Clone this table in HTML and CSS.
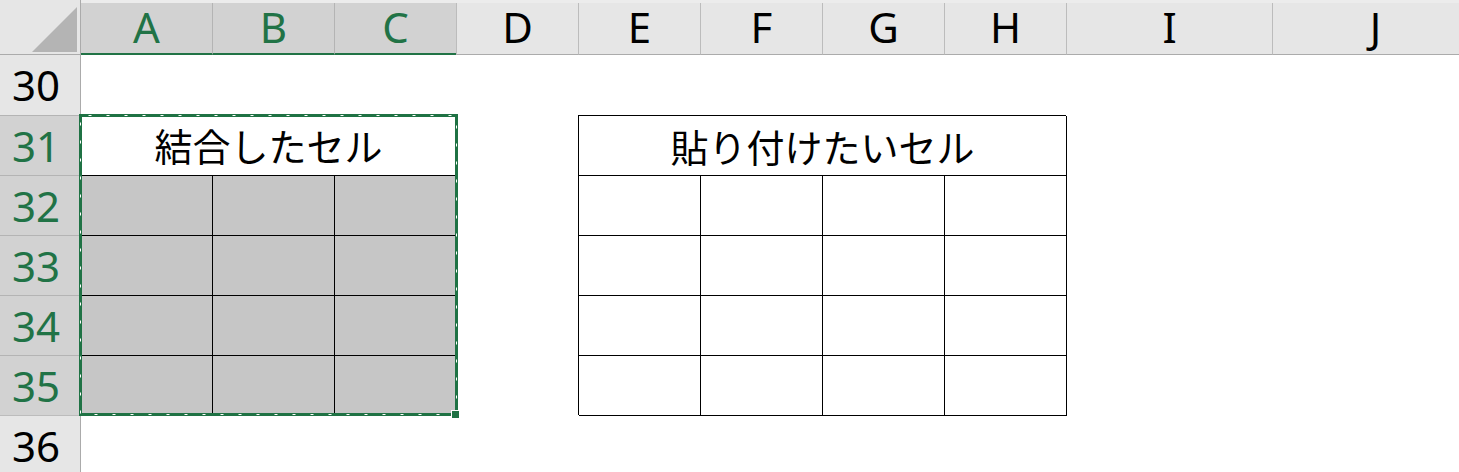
FILE: index.html
```html
<!DOCTYPE html>
<html lang="ja">
<head>
<meta charset="utf-8">
<title>Sheet</title>
<link rel="stylesheet" href="styles.css">
</head>
<body>
<div class="sheet">
  <div class="colhdrs">
    <div class="corner"><span class="tri"></span></div>
    <div class="ch ch-a sel">A</div>
    <div class="ch sel">B</div>
    <div class="ch sel">C</div>
    <div class="ch">D</div>
    <div class="ch">E</div>
    <div class="ch">F</div>
    <div class="ch">G</div>
    <div class="ch">H</div>
    <div class="ch ch-wide">I</div>
    <div class="ch ch-wide">J</div>
  </div>
  <div class="body">
    <div class="rowhdrs">
      <div class="rh first">30</div>
      <div class="rh sel">31</div>
      <div class="rh sel">32</div>
      <div class="rh sel">33</div>
      <div class="rh sel">34</div>
      <div class="rh sel">35</div>
      <div class="rh">36</div>
    </div>
    <div class="cells">
      <div class="lt-title">結合したセル</div>
      <div class="lt-body">
        <div class="gc"></div><div class="gc gl"></div><div class="gc gl"></div>
        <div class="gc"></div><div class="gc gl"></div><div class="gc gl"></div>
        <div class="gc"></div><div class="gc gl"></div><div class="gc gl"></div>
        <div class="gc"></div><div class="gc gl"></div><div class="gc gl"></div>
      </div>
      <div class="rt">
        <div class="rt-title">貼り付けたいセル</div>
        <div class="wc"></div><div class="wc"></div><div class="wc"></div><div class="wc"></div>
        <div class="wc"></div><div class="wc"></div><div class="wc"></div><div class="wc"></div>
        <div class="wc"></div><div class="wc"></div><div class="wc"></div><div class="wc"></div>
        <div class="wc"></div><div class="wc"></div><div class="wc"></div><div class="wc"></div>
      </div>
    </div>
  </div>
  <div class="selection">
    <svg class="ants" width="379" height="302" viewBox="0 0 379 302" aria-hidden="true">
      <rect x="1.5" y="1.5" width="376" height="299" fill="none" stroke="#ffffff" stroke-width="1" stroke-dasharray="3 15" stroke-dashoffset="-8"/>
    </svg>
  </div>
  <div class="fill-handle"></div>
</div>
</body>
</html>
```

FILE: styles.css
```css
html, body {
  margin: 0;
  padding: 0;
  background: #ffffff;
  overflow: hidden;
}

.sheet {
  position: relative;
  width: 1478px;
  font-family: "Noto Sans", "Open Sans", "Noto Sans CJK JP", sans-serif;
}

/* column headers */
.colhdrs {
  display: flex;
  height: 55px;
  background: #ececec;
  box-sizing: border-box;
}

.corner {
  position: relative;
  width: 81px;
  flex: none;
  background: #e6e6e6;
  border-right: 1px solid #ababab;
  border-bottom: 1px solid #ababab;
  box-sizing: border-box;
}

.tri {
  position: absolute;
  left: 32px;
  top: 7px;
  width: 0;
  height: 0;
  border-left: 45px solid transparent;
  border-bottom: 45px solid #b4b4b4;
}

.ch {
  width: 122px;
  flex: none;
  margin-top: 3px;
  height: 52px;
  box-sizing: border-box;
  background: #e6e6e6;
  border-left: 1px solid #bcbcbc;
  border-bottom: 1px solid #ababab;
  display: flex;
  align-items: center;
  justify-content: center;
  font-size: 42px;
  line-height: 1;
  color: #000000;
  padding-bottom: 3px;
}

.ch-a {
  width: 131px;
  border-left: none;
}

.ch-wide {
  width: 206px;
}

.ch.sel {
  background: #d2d2d2;
  color: #217346;
  border-bottom: 2px solid #217346;
  border-left-color: #b4b4b4;
  padding-bottom: 2px;
}

/* body */
.body {
  display: flex;
}

.rowhdrs {
  width: 81px;
  flex: none;
  display: flex;
  flex-direction: column;
}

.rh {
  height: 60px;
  box-sizing: border-box;
  background: #e6e6e6;
  border-top: 1px solid #bcbcbc;
  border-right: 1px solid #ababab;
  display: flex;
  align-items: center;
  justify-content: center;
  padding-right: 8px;
  font-size: 42px;
  line-height: 1;
  color: #000000;
}

.rh.first {
  border-top: none;
}

.rh.sel {
  background: #d2d2d2;
  color: #217346;
  border-top-color: #b4b4b4;
}

.cells {
  flex: none;
  display: grid;
  grid-template-columns: 131px repeat(7, 122px) 206px 206px;
  grid-template-rows: repeat(7, 60px);
  font-family: "Noto Sans CJK JP", "Noto Sans", sans-serif;
  color: #000000;
}

.lt-title {
  grid-row: 2;
  grid-column: 1 / 4;
  display: flex;
  align-items: center;
  justify-content: center;
  font-size: 38px;
  line-height: 1;
  background: #ffffff;
}

.lt-body {
  grid-row: 3 / 7;
  grid-column: 1 / 4;
  display: grid;
  grid-template-columns: 131px 122px 122px;
  grid-template-rows: repeat(4, 60px);
}

.gc {
  background: #c6c6c6;
  border-top: 1px solid #000000;
  box-sizing: border-box;
}

.gc.gl {
  border-left: 1px solid #000000;
}

.rt {
  grid-row: 2 / 7;
  grid-column: 5 / 9;
  display: grid;
  grid-template-columns: repeat(4, 122px);
  grid-template-rows: repeat(5, 60px);
  background: #ffffff;
  box-shadow: 1px 1px 0 #000000;
}

.rt-title {
  grid-column: 1 / 5;
  display: flex;
  align-items: center;
  justify-content: center;
  font-size: 38px;
  line-height: 1;
  border-top: 1px solid #000000;
  border-left: 1px solid #000000;
  box-sizing: border-box;
}

.wc {
  border-top: 1px solid #000000;
  border-left: 1px solid #000000;
  box-sizing: border-box;
}

/* selection overlay */
.selection {
  position: absolute;
  left: 79px;
  top: 114px;
  width: 379px;
  height: 302px;
  box-sizing: border-box;
  border: 3px solid #1f7244;
}

.ants {
  position: absolute;
  left: -3px;
  top: -3px;
  display: block;
}

.fill-handle {
  position: absolute;
  left: 451px;
  top: 410px;
  width: 8px;
  height: 8px;
  box-sizing: border-box;
  background: #1f7244;
  border: 1px solid #ffffff;
  border-right: none;
  border-bottom: none;
}
```
